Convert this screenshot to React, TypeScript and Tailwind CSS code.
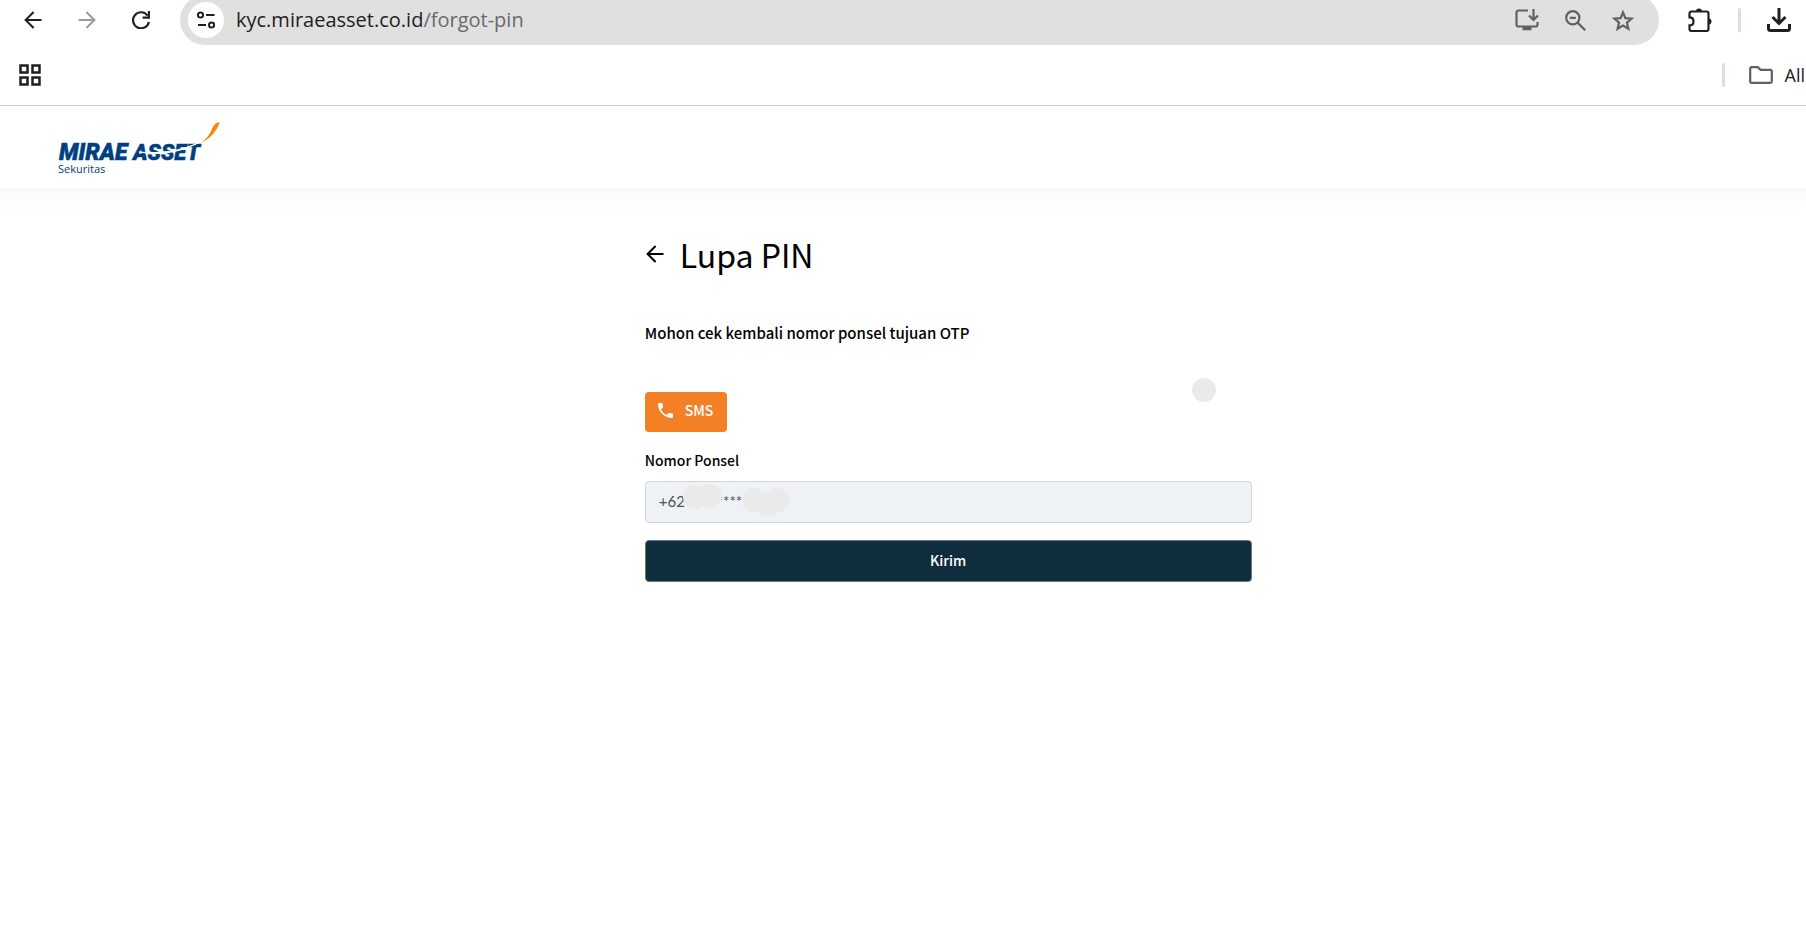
import React, { useState } from "react";

const latin = "font-['Noto_Sans_CJK_SC',sans-serif]";

function ArrowIcon({ className = "" }: { className?: string }) {
  return (
    <svg viewBox="0 0 18 18" className={className} fill="none" stroke="currentColor" strokeWidth="2">
      <path d="M17.5 9H2M9.6 1 1.6 9l8 8" />
    </svg>
  );
}

function ReloadIcon() {
  return (
    <svg viewBox="0 0 18 18" className="size-[18px]" fill="none" stroke="currentColor" strokeWidth="2.2">
      <path d="M15.6 4.6A8 8 0 1 0 16.9 11" />
      <path d="M17 0v6.6h-6.4" />
    </svg>
  );
}

function SiteInfoIcon() {
  return (
    <svg viewBox="0 0 18 18" className="size-[18px]" fill="none" stroke="currentColor" strokeWidth="2">
      <circle cx="3.5" cy="4" r="2.6" />
      <path d="M9 4h8.5M1 14h8" />
      <circle cx="14.6" cy="14" r="2.6" />
    </svg>
  );
}

function InstallIcon() {
  return (
    <svg viewBox="0 0 24 22" className="h-[22px] w-6" fill="none" stroke="currentColor" strokeWidth="2.2">
      <path d="M13 1.5H3.5a2 2 0 0 0-2 2v12a2 2 0 0 0 2 2h17a2 2 0 0 0 2-2V13" />
      <path d="M18.5 0v10.5M14 6.5l4.5 4.5L23 6.5" />
      <path d="M7.5 19.5h9" strokeWidth="3.5" />
    </svg>
  );
}

function ZoomOutIcon() {
  return (
    <svg viewBox="0 0 21 21" className="size-[21px]" fill="none" stroke="currentColor" strokeWidth="2.2">
      <circle cx="7.8" cy="7.8" r="6.6" />
      <path d="m12.6 12.6 7.6 7.6M4.8 7.8h6" />
    </svg>
  );
}

function StarIcon() {
  return (
    <svg viewBox="0 0 22 21" className="h-[21px] w-[22px]" fill="none" stroke="currentColor" strokeWidth="2.2">
      <path d="m11 2.4 2.4 5.7 6.3.5-4.8 4 1.5 6.2-5.4-3.3-5.4 3.3 1.5-6.2-4.8-4 6.3-.5Z" />
    </svg>
  );
}

function ExtensionsIcon() {
  return (
    <svg viewBox="0 0 24 24" className="size-6" fill="none" stroke="currentColor" strokeWidth="2.2">
      <path d="M3.5 3.5h15a2 2 0 0 1 2 2V21a2 2 0 0 1-2 2h-15a2 2 0 0 1-2-2v-3.6c3 0 4-1.9 4-4s-1-4-4-4V5.5a2 2 0 0 1 2-2Z" />
      <path d="M8 3.5a3 3 0 0 1 6 0ZM20.5 10.5a3 3 0 0 1 0 6Z" fill="currentColor" stroke="none" />
    </svg>
  );
}

function DownloadIcon() {
  return (
    <svg viewBox="0 0 24 24" className="size-6" fill="none" stroke="currentColor" strokeWidth="3">
      <path d="M12 0v15M5.5 9l6.5 6.5L18.5 9" />
      <path d="M1.5 16v4.5a2 2 0 0 0 2 2h17a2 2 0 0 0 2-2V16" />
    </svg>
  );
}

function FolderIcon() {
  return (
    <svg viewBox="0 0 24 18" className="h-[18px] w-6" fill="none" stroke="currentColor" strokeWidth="2.2">
      <path d="M1.2 15.5v-13A1.3 1.3 0 0 1 2.5 1.2h6.3l2.7 2.7h10a1.3 1.3 0 0 1 1.3 1.3v10.3a1.3 1.3 0 0 1-1.3 1.3h-19a1.3 1.3 0 0 1-1.3-1.3Z" />
    </svg>
  );
}

function AppsIcon() {
  return (
    <svg viewBox="0 0 22 22" className="size-[22px]" fill="none" stroke="currentColor" strokeWidth="2.5">
      <path d="M1.5 1.5h7v7h-7zM13.5 1.5h7v7h-7zM1.5 13.5h7v7h-7zM13.5 13.5h7v7h-7z" />
    </svg>
  );
}

function Logo() {
  return (
    <svg viewBox="0 0 164 56" className="h-14 w-[164px]" role="img" aria-label="Mirae Asset Sekuritas">
      <g fill="#00407f" stroke="#00407f" strokeWidth="0.5" fontFamily="Roboto, sans-serif" fontWeight="900" fontStyle="italic">
        <text x="1" y="38" fontSize="23">
          MIRAE
        </text>
        <text x="75" y="38" fontSize="22">
          ASSET
        </text>
      </g>
      <text x="0" y="51" fill="#00407f" fontFamily="'Open Sans', sans-serif" fontSize="11">
        Sekuritas
      </text>
      <path d="M81 30c22 4 42 0 61-10-18 9-40 12-61 10Z" fill="#fff" stroke="#fff" strokeWidth="1" />
      <path d="M143.5 20.5c6-5 9-9 11-15 1.300-3 3.500-4.500 7-5.500-.6 3-1.500 5.500-3.500 8-4 6-8.500 10-14.500 12.500Z" fill="#f5870f" />
    </svg>
  );
}

function BrowserBar() {
  return (
    <div className="h-[106px] overflow-hidden border-b border-[#c8c8c8] bg-white font-['Open_Sans',sans-serif] text-[#1f2023]">
      <div className="-mt-[5px] flex h-[50px] items-center">
        <div className="flex w-[180px] shrink-0 items-center gap-9 pl-6">
          <button type="button" aria-label="Back">
            <ArrowIcon className="size-[18px]" />
          </button>
          <button type="button" aria-label="Forward" className="text-[#9b9b9b]">
            <ArrowIcon className="size-[18px] rotate-180" />
          </button>
          <button type="button" aria-label="Reload">
            <ReloadIcon />
          </button>
        </div>

        <div className="flex h-full flex-1 items-center rounded-full bg-[#e0e0e0] pr-[25px] pl-2">
          <button
            type="button"
            aria-label="Site information"
            className="flex size-9 items-center justify-center rounded-full bg-white"
          >
            <SiteInfoIcon />
          </button>
          <p className="ml-3 flex-1 text-[20px]">
            kyc.miraeasset.co.id<span className="text-[#6a6a6a]">/forgot-pin</span>
          </p>
          <div className="flex items-center gap-[26px] text-[#5f6164]">
            <button type="button" aria-label="Install app">
              <InstallIcon />
            </button>
            <button type="button" aria-label="Zoom">
              <ZoomOutIcon />
            </button>
            <button type="button" aria-label="Bookmark this tab">
              <StarIcon />
            </button>
          </div>
        </div>

        <div className="flex items-center gap-[26px] pr-[15px] pl-[29px]">
          <button type="button" aria-label="Extensions">
            <ExtensionsIcon />
          </button>
          <span className="h-6 w-[3px] rounded-full bg-[#e3dbd8]" />
          <button type="button" aria-label="Downloads">
            <DownloadIcon />
          </button>
        </div>
      </div>

      <div className="flex h-[60px] items-center pl-[19px]">
        <button type="button" aria-label="Apps">
          <AppsIcon />
        </button>
        <span className="ml-auto h-6 w-[3px] rounded-full bg-[#e3dbd8]" />
        <button type="button" className="ml-6 flex items-center gap-3 pr-px text-[18px]">
          <span className="text-[#5f6164]">
            <FolderIcon />
          </span>
          All
        </button>
      </div>
    </div>
  );
}

// grey marker dots that hide part of the number
const dots = [
  "left-[38px] top-1",
  "left-[53px] top-[3px]",
  "left-[97px] top-[7px]",
  "left-[111px] top-[11px]",
  "left-[120px] top-[7px]",
];

export default function App() {
  const [phone, setPhone] = useState("+62**************");

  return (
    <div className="min-h-screen overflow-x-hidden bg-white">
      <BrowserBar />

      <header className="flex h-[82px] items-start pt-4 pl-[58px]">
        <a href="#">
          <Logo />
        </a>
      </header>
      <div className="h-6 bg-linear-to-b from-[#f9f9f9] to-white" />

      {/* the page runs on a little past the right edge of the window */}
      <main className={`${latin} w-[105%] text-black`}>
        <form className="mx-auto w-[32%]" onSubmit={(e) => e.preventDefault()}>
          <div className="flex h-[84px] items-center gap-4 pl-px">
            <button type="button" aria-label="Kembali">
              <ArrowIcon className="size-[18px]" />
            </button>
            <h1 className="text-[32px]">Lupa PIN</h1>
          </div>

          <p className="mt-[25px] text-[15px] leading-6 font-medium">Mohon cek kembali nomor ponsel tujuan OTP</p>
          <div className="mt-[33px] flex items-start justify-between">
            <button
              type="button"
              className="mt-[14px] flex h-10 w-[82px] items-center gap-3 rounded bg-[#f48026] pb-[3px] pl-[13px] text-[14px] font-medium text-white"
            >
              <svg viewBox="3 3 18 18" className="size-[15px]" fill="currentColor">
                <path d="M6.62 10.79c1.44 2.83 3.76 5.14 6.59 6.59l2.2-2.2c.27-.27.67-.36 1.02-.24 1.12.37 2.33.57 3.57.57.55 0 1 .45 1 1V20c0 .55-.45 1-1 1-9.39 0-17-7.61-17-17 0-.55.45-1 1-1h3.5c.55 0 1 .45 1 1 0 1.25.2 2.45.57 3.57.11.35.03.74-.25 1.02l-2.2 2.2z" />
              </svg>
              SMS
            </button>
            <span className="mr-9 size-6 rounded-full bg-[#eaeaea]" />
          </div>

          <label htmlFor="phone" className="mt-[18px] block text-[14px] leading-5 font-medium">
            Nomor Ponsel
          </label>
          <div className="relative mt-[11px]">
            <input
              id="phone"
              type="tel"
              value={phone}
              onChange={(e) => setPhone(e.target.value)}
              className="h-[42px] w-full rounded border border-[#ced4da] bg-[#eef1f6] px-[13px] pb-[2px] font-['Lato',sans-serif] text-[15px] text-[#495057]"
            />
            {dots.map((dot) => (
              <span key={dot} className={`absolute size-6 rounded-full bg-[#eaeaea] ${dot}`} />
            ))}
          </div>

          <button
            type="submit"
            className="mt-[17px] h-[42px] w-full rounded border border-[#6c757d] bg-[#102d3e] pb-px text-[14px] font-medium text-white"
          >
            Kirim
          </button>
        </form>
      </main>
    </div>
  );
}
